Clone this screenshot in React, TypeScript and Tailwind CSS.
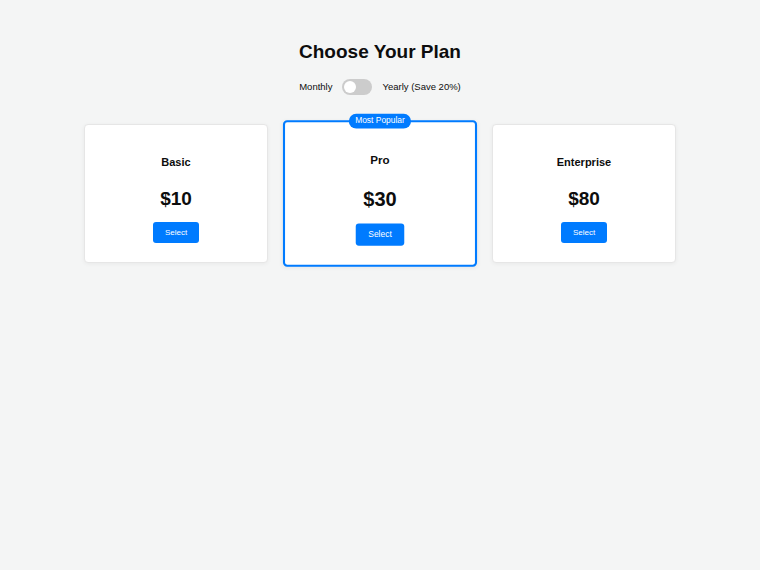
import { useState } from "react";

const plans = [
  { name: "Basic", price: 10 },
  { name: "Pro", price: 30, popular: true },
  { name: "Enterprise", price: 80 },
];

export default function App() {
  const [yearly, setYearly] = useState(false);

  return (
    <div className="min-h-[570px] bg-[#f4f5f5] font-['Liberation_Sans',Arial,sans-serif] text-[#0d0d0d]">
      <div className="flex flex-col items-center pt-[40px]">
        <h1 className="text-[19px] font-bold leading-[24px]">Choose Your Plan</h1>

        <div className="mt-[15px] flex items-center gap-[10px] text-[9.5px] leading-[12px]">
          <span>Monthly</span>
          <button
            className="relative h-[16px] w-[30px] rounded-full bg-[#cccccc]"
            onClick={() => setYearly(!yearly)}
            aria-label="Toggle billing"
          >
            <span
              className={
                yearly
                  ? "absolute left-[16px] top-[2px] h-[12px] w-[12px] rounded-full bg-white"
                  : "absolute left-[2px] top-[2px] h-[12px] w-[12px] rounded-full bg-white"
              }
            />
          </button>
          <span>Yearly (Save 20%)</span>
        </div>

        <div className="mt-[29px] flex items-center justify-center gap-[20px]">
          {plans.map((plan) => (
            <div
              key={plan.name}
              className={
                plan.popular
                  ? "relative flex w-[184px] scale-[1.055] flex-col items-center rounded-[4px] border-2 border-[#007bff] bg-white pb-[18px] pt-[30px] shadow-[0_1px_4px_rgba(0,0,0,0.06)]"
                  : "relative flex w-[184px] flex-col items-center rounded-[4px] border border-[#e6e6e6] bg-white pb-[19px] pt-[31px] shadow-[0_1px_4px_rgba(0,0,0,0.05)]"
              }
            >
              {plan.popular && (
                <span className="absolute left-1/2 top-[-8px] -translate-x-1/2 rounded-full bg-[#007bff] px-[6px] py-[2px] text-[8px] leading-[10px] text-white">
                  Most Popular
                </span>
              )}
              <h3 className="text-[11px] font-bold leading-[13px]">{plan.name}</h3>
              <div className="mt-[19px] text-[19px] font-bold leading-[22px]">
                ${yearly ? Math.round(plan.price * 12 * 0.8) : plan.price}
              </div>
              <button className="mt-[12px] h-[21px] rounded-[3px] bg-[#007bff] px-[12px] text-[8px] text-white">
                Select
              </button>
            </div>
          ))}
        </div>
      </div>
    </div>
  );
}
